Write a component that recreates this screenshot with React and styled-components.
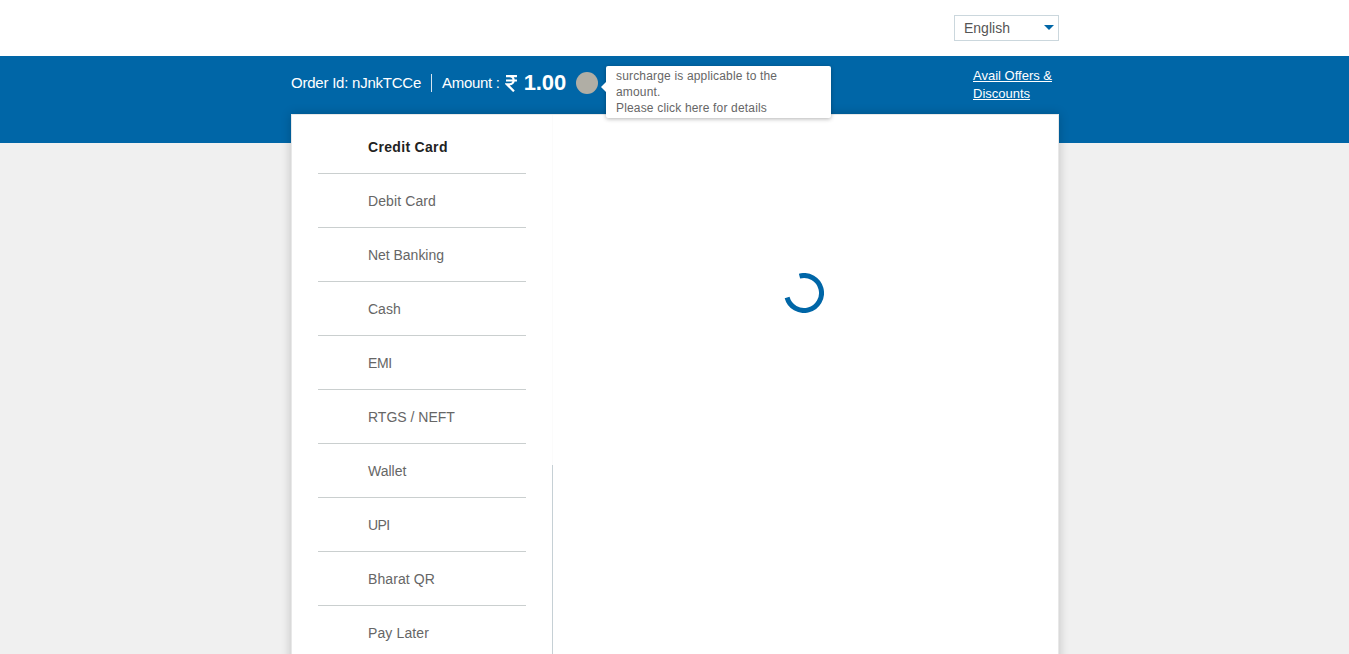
import React from "react";
import styled, { createGlobalStyle } from "styled-components";

const BLUE = "#0066a7";

const GlobalStyle = createGlobalStyle`
  * { box-sizing: border-box; }
  body {
    margin: 0;
    background: #f0f0f0;
    font-family: "Liberation Sans", Arial, sans-serif;
    overflow: hidden;
  }
`;

const Page = styled.div`
  height: 654px;
  overflow: hidden;
`;

const Container = styled.div`
  width: 768px;
  margin: 0 0 0 291px;
`;

const TopBar = styled.header`
  height: 56px;
  background: #fff;
`;

const TopBarInner = styled(Container)`
  display: flex;
  justify-content: flex-end;
  padding-top: 15px;
`;

const LanguageSelect = styled.div`
  display: flex;
  align-items: center;
  justify-content: space-between;
  width: 105px;
  height: 26px;
  padding: 0 4px 0 9px;
  border: 1px solid #cbd7dd;
  color: #555;
  font-size: 14px;
`;

const Caret = styled.svg`
  display: block;
  margin-top: -2px;
`;

const Band = styled.section`
  height: 87px;
  background: ${BLUE};
`;

const BandInner = styled(Container)`
  display: flex;
  align-items: flex-start;
  color: #fff;
`;

const Order = styled.div`
  display: flex;
  align-items: center;
  height: 54px;
  font-size: 15px;
  white-space: nowrap;
`;

const OrderId = styled.span`
  width: 130px;
  padding-bottom: 2px;
  letter-spacing: -0.23px;
`;

const Divider = styled.span`
  width: 1px;
  height: 18px;
  margin: 0 10px;
  background: #d5e5f0;
`;

const Amount = styled.div`
  display: flex;
  align-items: center;
  width: 124px;
`;

const AmountLabel = styled.span`
  width: 63px;
  padding-bottom: 2px;
  letter-spacing: -0.3px;
`;

const Rupee = styled.svg`
  display: block;
  margin-right: 7px;
`;

const AmountValue = styled.strong`
  font-size: 22px;
  line-height: 26px;
  letter-spacing: -0.15px;
`;

const InfoDot = styled.span`
  position: relative;
  width: 22px;
  height: 22px;
  margin-left: 10px;
  border-radius: 50%;
  background: #b0aea5;
`;

const Tooltip = styled.div`
  position: absolute;
  top: -6px;
  left: 30px;
  z-index: 2;
  width: 225px;
  height: 52px;
  padding: 2px 10px;
  border-radius: 2px;
  background: #fff;
  box-shadow: 0 1px 4px rgba(0, 0, 0, 0.3);
  color: #666;
  font-size: 12px;
  line-height: 16px;
  letter-spacing: 0.17px;

  &::before {
    content: "";
    position: absolute;
    top: 16px;
    left: -5px;
    border: 5px solid transparent;
    border-left: 0;
    border-right-color: #fff;
  }
`;

const TipLine = styled.div`
  white-space: nowrap;
`;

const OffersLink = styled.a`
  width: 86px;
  margin: 11px 0 0 auto;
  color: #fff;
  font-size: 13px;
  line-height: 18px;
  text-decoration: underline;
`;

const Card = styled(Container)`
  display: flex;
  height: 620px;
  margin-top: -29px;
  border: 1px solid #e8e8e8;
  background: #fff;
  box-shadow: 0 0 10px rgba(0, 0, 0, 0.2);
`;

const Menu = styled.nav`
  width: 260px;
  padding: 5px 26px 0;
`;

const MenuItem = styled.div`
  display: flex;
  align-items: center;
  height: 54px;
  padding-left: 50px;
  border-bottom: 1px solid #cacfcf;
  color: ${(p) => (p.$active ? "#222" : "#666")};
  font-size: 14px;
  font-weight: ${(p) => (p.$active ? 700 : 400)};
  letter-spacing: ${(p) => p.$spacing}px;
`;

const Separator = styled.div`
  display: flex;
  flex-direction: column;
  width: 1px;
  background: #fbfbfb;

  &::after {
    content: "";
    flex: 1;
    margin-top: 350px;
    background: #c6d0d5;
  }
`;

const Content = styled.main`
  flex: 1;
  display: flex;
  justify-content: center;
  padding-top: 158px;
`;

const Spinner = styled.svg`
  display: block;
  width: 40px;
  height: 40px;
  margin-right: 4px;
`;

const methods = [
  ["Credit Card", 0.32],
  ["Debit Card", 0.1],
  ["Net Banking", -0.03],
  ["Cash", 0],
  ["EMI", -0.4],
  ["RTGS / NEFT", 0],
  ["Wallet", 0],
  ["UPI", -0.6],
  ["Bharat QR", 0.1],
  ["Pay Later", 0.12],
];

export default function App() {
  return (
    <Page>
      <GlobalStyle />
      <TopBar>
        <TopBarInner>
          <LanguageSelect>
            English
            <Caret width="10" height="5" viewBox="0 0 10 5">
              <path d="M0 0H10L5 5Z" fill={BLUE} />
            </Caret>
          </LanguageSelect>
        </TopBarInner>
      </TopBar>
      <Band>
        <BandInner>
          <Order>
            <OrderId>Order Id: nJnkTCCe</OrderId>
            <Divider />
            <Amount>
              <AmountLabel>Amount :</AmountLabel>
              <Rupee width="12" height="17" viewBox="0 0 12 17">
                <path
                  d="M1 1.2H12M1 5.5H12M1.3 1.2H4.4C10.2 1.2 10.2 9.4 4.4 9.4H2L9 16.4"
                  fill="none"
                  stroke="#fff"
                  strokeWidth="2.2"
                />
              </Rupee>
              <AmountValue>1.00</AmountValue>
            </Amount>
            <InfoDot>
              <Tooltip>
                <TipLine>surcharge is applicable to the</TipLine>
                <TipLine>amount.</TipLine>
                <TipLine>Please click here for details</TipLine>
              </Tooltip>
            </InfoDot>
          </Order>
          <OffersLink>Avail Offers &amp; Discounts</OffersLink>
        </BandInner>
      </Band>
      <Card>
        <Menu>
          {methods.map(([label, spacing], i) => (
            <MenuItem key={label} $active={i === 0} $spacing={spacing}>
              {label}
            </MenuItem>
          ))}
        </Menu>
        <Separator />
        <Content>
          <Spinner viewBox="-20 -20 40 40">
            <path
              d="M-4.5 -16.9A17.5 17.5 0 1 1 -16.9 4.5"
              fill="none"
              stroke={BLUE}
              strokeWidth="5"
            />
          </Spinner>
        </Content>
      </Card>
    </Page>
  );
}
